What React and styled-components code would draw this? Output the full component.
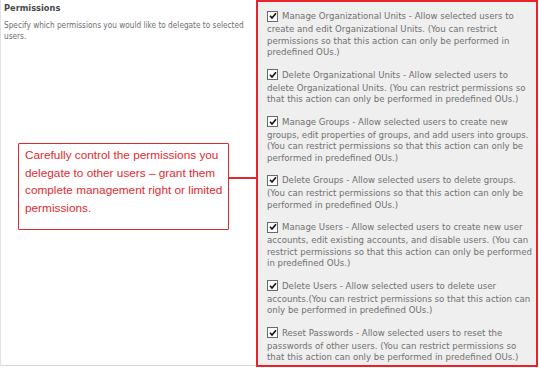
import React from "react";
import styled, { createGlobalStyle } from "styled-components";

const GlobalStyle = createGlobalStyle`
  html, body {
    margin: 0;
    padding: 0;
    background: #ffffff;
  }
`;

const Page = styled.div`
  position: relative;
  display: flex;
  width: 540px;
  height: 368px;
  overflow: hidden;
  font-family: "DejaVu Sans Condensed", "DejaVu Sans", sans-serif;
`;

const Side = styled.div`
  width: 256px;
  height: 366px;
  border-left: 1px solid #e2e2e2;
  border-bottom: 1px solid #d4d4d4;
  padding: 2px 0 0 3px;
  box-sizing: border-box;
  white-space: nowrap;
`;

const SideTitle = styled.div`
  font-size: 9.2px;
  font-weight: bold;
  color: #4a4a4a;
  line-height: 11px;
`;

const SideText = styled.div`
  margin-top: 7px;
  font-size: 8.2px;
  line-height: 11px;
  color: #6e6e6e;
`;

const Panel = styled.div`
  width: 282px;
  height: 367px;
  box-sizing: border-box;
  border: 2px solid #e8232b;
  background: #efefef;
  padding: 7px 0 0 9px;
  white-space: nowrap;
`;

const Item = styled.div`
  margin-bottom: 10px;
  font-size: 9.55px;
  line-height: 11.5px;
  color: #707070;
`;

const Head = styled.div`
  display: flex;
  align-items: center;
  height: 14px;
  gap: 4px;
`;

const Box = styled.span`
  display: inline-flex;
  width: 9px;
  height: 9px;
  border: 1px solid #6a6a6a;
  background: #fdfdfd;
  align-items: center;
  justify-content: center;
  flex-shrink: 0;
`;

const Callout = styled.div`
  position: absolute;
  left: 18px;
  top: 143px;
  width: 211px;
  height: 87px;
  box-sizing: border-box;
  border: 1.5px solid #e02a2f;
  border-radius: 1px;
  padding: 3px 0 0 6px;
  background: #ffffff;
  font-family: "Liberation Sans", Arial, sans-serif;
  font-size: 11.8px;
  line-height: 17.6px;
  color: #e32a30;
  white-space: nowrap;
`;

const Connector = styled.div`
  position: absolute;
  left: 228px;
  top: 177px;
  width: 30px;
  height: 2px;
  background: #e02a2f;
`;

const items = [
  {
    title: "Manage Organizational Units - Allow selected users to",
    lines: [
      "create and edit Organizational Units. (You can restrict",
      "permissions so that this action can only be performed in",
      "predefined OUs.)",
    ],
  },
  {
    title: "Delete Organizational Units - Allow selected users to",
    lines: [
      "delete Organizational Units. (You can restrict permissions so",
      "that this action can only be performed in predefined OUs.)",
    ],
  },
  {
    title: "Manage Groups - Allow selected users to create new",
    lines: [
      "groups, edit properties of groups, and add users into groups.",
      "(You can restrict permissions so that this action can only be",
      "performed in predefined OUs.)",
    ],
  },
  {
    title: "Delete Groups - Allow selected users to delete groups.",
    lines: [
      "(You can restrict permissions so that this action can only be",
      "performed in predefined OUs.)",
    ],
  },
  {
    title: "Manage Users - Allow selected users to create new user",
    lines: [
      "accounts, edit existing accounts, and disable users. (You can",
      "restrict permissions so that this action can only be performed",
      "in predefined OUs.)",
    ],
  },
  {
    title: "Delete Users - Allow selected users to delete user",
    lines: [
      "accounts.(You can restrict permissions so that this action can",
      "only be performed in predefined OUs.)",
    ],
  },
  {
    title: "Reset Passwords - Allow selected users to reset the",
    lines: [
      "passwords of other users. (You can restrict permissions so",
      "that this action can only be performed in predefined OUs.)",
    ],
  },
];

function Check() {
  return (
    <Box>
      <svg width="8" height="8" viewBox="0 0 8 8">
        <path
          d="M1 3.8 L3 6 L7 1.2"
          fill="none"
          stroke="#111"
          strokeWidth="1.6"
        />
      </svg>
    </Box>
  );
}

export default function App() {
  return (
    <>
      <GlobalStyle />
      <Page>
        <Side>
          <SideTitle>Permissions</SideTitle>
          <SideText>
            Specify which permissions you would like to delegate to selected
            <br />
            users.
          </SideText>
        </Side>
        <Panel>
          {items.map((it) => (
            <Item key={it.title}>
              <Head>
                <Check />
                <span>{it.title}</span>
              </Head>
              {it.lines.map((l) => (
                <div key={l}>{l}</div>
              ))}
            </Item>
          ))}
        </Panel>
        <Connector />
        <Callout>
          Carefully control the permissions you
          <br />
          delegate to other users – grant them
          <br />
          complete management right or limited
          <br />
          permissions.
        </Callout>
      </Page>
    </>
  );
}
